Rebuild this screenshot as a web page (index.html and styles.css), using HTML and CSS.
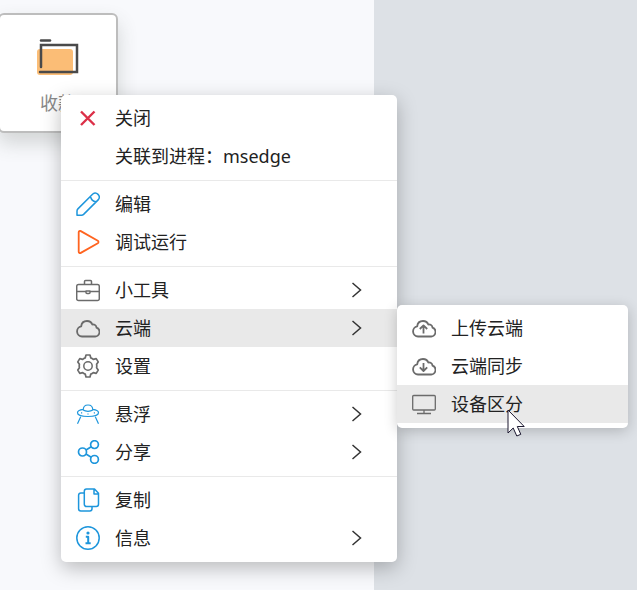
FILE: index.html
```html
<!DOCTYPE html>
<html lang="zh-CN">
<head>
<meta charset="utf-8">
<title>云端</title>
<link rel="stylesheet" href="styles.css">
</head>
<body>
<main class="desk">
  <section class="panel">
    <a class="card" href="#">
      <svg class="folder" viewBox="0 0 44 40" aria-hidden="true">
        <rect x="2" y="12" width="36" height="26" rx="3" fill="#fbbd76"/>
        <path d="M6 3.500h9" stroke="#4a4a4a" stroke-width="2.500" stroke-linecap="round"/>
        <path d="M6 30V8h36v27H5" fill="none" stroke="#4a4a4a" stroke-width="2.500" stroke-linecap="round"/>
      </svg>
      <span>收款</span>
    </a>
  </section>
  <section class="backdrop"></section>
</main>

<nav class="menu main-menu">
  <button class="item"><svg class="icon red" viewBox="0 0 24 24"><path d="m5 5.500 13.500 13.500m0-13.500-13.500 13.500" stroke-width="2.400"/></svg><span>关闭</span></button>
  <button class="item"><span class="icon"></span><span>关联到进程：msedge</span></button>
  <hr>
  <button class="item"><svg class="icon blue" viewBox="0 0 24 24"><path d="M1 23.200v-4.200a3 3 0 0 1 .9-2.100L16.800 2a4 4 0 0 1 5.600 5.600L7.600 22.400a3 3 0 0 1-2 .8zM14.500 4.300c.5 3 2.500 5 5.500 5.500"/></svg><span>编辑</span></button>
  <button class="item"><svg class="icon orange" viewBox="0 0 24 24"><path d="M2.700 2.300v19.400a1.400 1.400 0 0 0 2.100 1.200l17-9.700a1.400 1.400 0 0 0 0-2.400l-17-9.700a1.400 1.400 0 0 0-2.100 1.200z" stroke-width="1.800"/></svg><span>调试运行</span></button>
  <hr>
  <button class="item"><svg class="icon" viewBox="0 0 24 24"><path d="M2.500 6.500h19a1.800 1.800 0 0 1 1.800 1.800v12.400a1.800 1.800 0 0 1-1.800 1.800h-19a1.800 1.800 0 0 1-1.800-1.800V8.300A1.800 1.800 0 0 1 2.500 6.500zM8.500 6V3.500a1 1 0 0 1 1-1h5a1 1 0 0 1 1 1V6M1 13.500h9m4 0h9M10 13v1.500a1 1 0 0 0 1 1h2a1 1 0 0 0 1-1V13z"/></svg><span>小工具</span><svg class="arrow" viewBox="0 0 12 18"><path d="m2.500 2 8 7-8 7"/></svg></button>
  <button class="item active" aria-expanded="true"><svg class="icon" viewBox="0 0 24 24"><path d="M6 20.500a5.100 5.100 0 0 1-.8-10.100C5.500 7 8 5 11 5c2.600 0 4.500 1.300 5.300 3.500 2.300-.3 4 1 4.200 3.100a4.600 4.600 0 0 1-1.300 8.900z" stroke-width="1.800"/></svg><span>云端</span><svg class="arrow" viewBox="0 0 12 18"><path d="m2.500 2 8 7-8 7"/></svg></button>
  <button class="item"><svg class="icon" viewBox="0 0 24 24"><path d="M10 1h4l.8 2.900a8.500 8.500 0 0 1 2.500 1.500l2.900-.8 2 3.300-1.600 2.300a8.500 8.500 0 0 1 0 3.600l1.600 2.300-2 3.300-2.900-.8a8.500 8.500 0 0 1-2.500 1.500L14 23h-4l-.8-2.900a8.500 8.500 0 0 1-2.500-1.500l-2.900.8-2-3.300 1.600-2.300a8.500 8.500 0 0 1 0-3.600L1.800 7.900l2-3.300 2.900.8a8.500 8.500 0 0 1 2.500-1.500z" stroke-width="1.700"/><circle cx="12" cy="12" r="4.200"/></svg><span>设置</span></button>
  <hr>
  <button class="item"><svg class="icon blue thin" viewBox="0 0 24 24"><path d="M7.200 8C7.200 5 9 3 12 3s4.800 2 4.800 5c-2.400 1.700-7.200 1.700-9.600 0zM7.300 7.300C4 7.700 1.500 9 1.500 10.800c0 2.200 4.700 3.700 10.500 3.700s10.500-1.500 10.500-3.700c0-1.800-2.500-3.100-5.800-3.500M4.700 14.700l-3.200 7M19.300 14.700l3.200 7M5 10.800h1.200m5.200 1.200h1.200m5.200-1.200H19"/></svg><span>悬浮</span><svg class="arrow" viewBox="0 0 12 18"><path d="m2.500 2 8 7-8 7"/></svg></button>
  <button class="item"><svg class="icon blue" viewBox="0 0 24 24"><g stroke-width="1.700"><circle cx="6.500" cy="12" r="4"/><circle cx="18.500" cy="4.600" r="3.900"/><circle cx="18.500" cy="19.400" r="3.900"/><path d="m10 10 5.200-3.200m-5.200 7.200 5.200 3.200"/></g></svg><span>分享</span><svg class="arrow" viewBox="0 0 12 18"><path d="m2.500 2 8 7-8 7"/></svg></button>
  <hr>
  <button class="item"><svg class="icon blue" viewBox="0 0 24 24"><path d="M10.500 1h8l4 4.300v11a2.200 2.200 0 0 1-2.200 2.200h-9.800a2.200 2.200 0 0 1-2.200-2.200V3.200A2.200 2.200 0 0 1 10.500 1zM18 1.200V6h4.500M8 5H4.800a2.200 2.200 0 0 0-2.200 2.200v13.600A2.200 2.200 0 0 0 4.800 23h9a2.200 2.200 0 0 0 2.200-2.200v-2"/></svg><span>复制</span></button>
  <button class="item"><svg class="icon blue" viewBox="0 0 24 24"><circle cx="12" cy="12" r="11.200"/><circle cx="12" cy="7" r="1.600" fill="currentColor" stroke="none"/><path d="M9.800 10.800h2.400v6.200M9.500 17.200h5.200" stroke-width="2"/></svg><span>信息</span><svg class="arrow" viewBox="0 0 12 18"><path d="m2.500 2 8 7-8 7"/></svg></button>
</nav>

<nav class="menu sub-menu">
  <button class="item"><svg class="icon" viewBox="0 0 24 24"><path d="M6 20.500a5.100 5.100 0 0 1-.8-10.100C5.500 7 8 5 11 5c2.600 0 4.500 1.300 5.300 3.500 2.300-.3 4 1 4.200 3.100a4.600 4.600 0 0 1-1.300 8.900zM11.500 17.500V10M7.800 13l3.700-3.600 3.700 3.600" stroke-width="1.800"/></svg><span>上传云端</span></button>
  <button class="item"><svg class="icon" viewBox="0 0 24 24"><path d="M6 20.500a5.100 5.100 0 0 1-.8-10.100C5.500 7 8 5 11 5c2.600 0 4.500 1.300 5.300 3.500 2.300-.3 4 1 4.200 3.100a4.600 4.600 0 0 1-1.300 8.900zM11.500 9v7.500M7.800 13.400l3.700 3.600 3.700-3.600" stroke-width="1.800"/></svg><span>云端同步</span></button>
  <button class="item active"><svg class="icon" viewBox="0 0 24 24"><path d="M1.700 3.500h20.600a1 1 0 0 1 1 1v12.500a1 1 0 0 1-1 1H1.700a1 1 0 0 1-1-1V4.500a1 1 0 0 1 1-1zM12 18v3.500M5 21.500h14" stroke-width="1.300"/></svg><span>设备区分</span></button>
</nav>

<svg class="cursor" viewBox="0 0 18 28" aria-hidden="true"><path d="M1 1v23l5.200-5 3.600 8 4-1.700-3.500-7.800H17.200z" fill="#fff" stroke="#1c1830"/></svg>
</body>
</html>
```
FILE: styles.css
```css
* {
  box-sizing: border-box;
}

body {
  margin: 0;
  font: 18px/24px "Noto Sans", "Noto Sans CJK SC", sans-serif;
  color: #222;
}

.desk {
  display: grid;
  grid-template-columns: 374fr 263fr;
  min-height: 100vh;
}

.panel {
  padding-top: 13px;
  background: #f8f9fc;
}

.backdrop {
  background: #dde1e6;
}

.card {
  display: flex;
  flex-direction: column;
  align-items: center;
  gap: 14px;
  width: 120px;
  height: 120px;
  margin-left: -2px;
  padding-top: 22px;
  border: 2px solid #bdbdbd;
  border-radius: 6px;
  background: #fff;
  box-shadow: 0 10px 20px rgba(60, 70, 60, 0.2);
  color: #888;
  text-decoration: none;
}

.folder {
  width: 44px;
  height: 40px;
  margin-right: 2px;
}

.menu {
  position: absolute;
  padding: 4px 0 5px;
  border-radius: 5px;
  background: #fff;
}

.main-menu {
  top: 95px;
  left: 61px;
  width: 336px;
  box-shadow: 0 6px 20px rgba(0, 0, 0, 0.26);
}

.sub-menu {
  top: 305px;
  left: 397px;
  width: 231px;
  box-shadow: 0 3px 14px rgba(0, 0, 0, 0.2);
}

.menu hr {
  height: 1px;
  margin: 5px 0 4px;
  border: 0;
  background: #e9e9e9;
}

.item {
  display: flex;
  align-items: center;
  gap: 15px;
  width: 100%;
  height: 38px;
  padding: 0 35px 0 15px;
  border: 0;
  background: none;
  color: inherit;
  font: inherit;
  text-align: left;
}

.active {
  background: #e9e9e9;
}

.icon {
  flex: none;
  width: 24px;
  height: 24px;
  color: #6b6b6b;
  fill: none;
  stroke: currentColor;
  stroke-width: 1.5;
  stroke-linejoin: round;
}

.thin {
  stroke-width: 1.2;
}

.red {
  color: #dc3048;
}

.blue {
  color: #1e96dc;
}

.orange {
  color: #ff6420;
}

.arrow {
  width: 12px;
  height: 18px;
  margin-left: auto;
  fill: none;
  stroke: #333;
  stroke-width: 1.5;
}

.cursor {
  position: absolute;
  top: 409px;
  left: 507px;
  width: 18px;
  height: 28px;
}
```
